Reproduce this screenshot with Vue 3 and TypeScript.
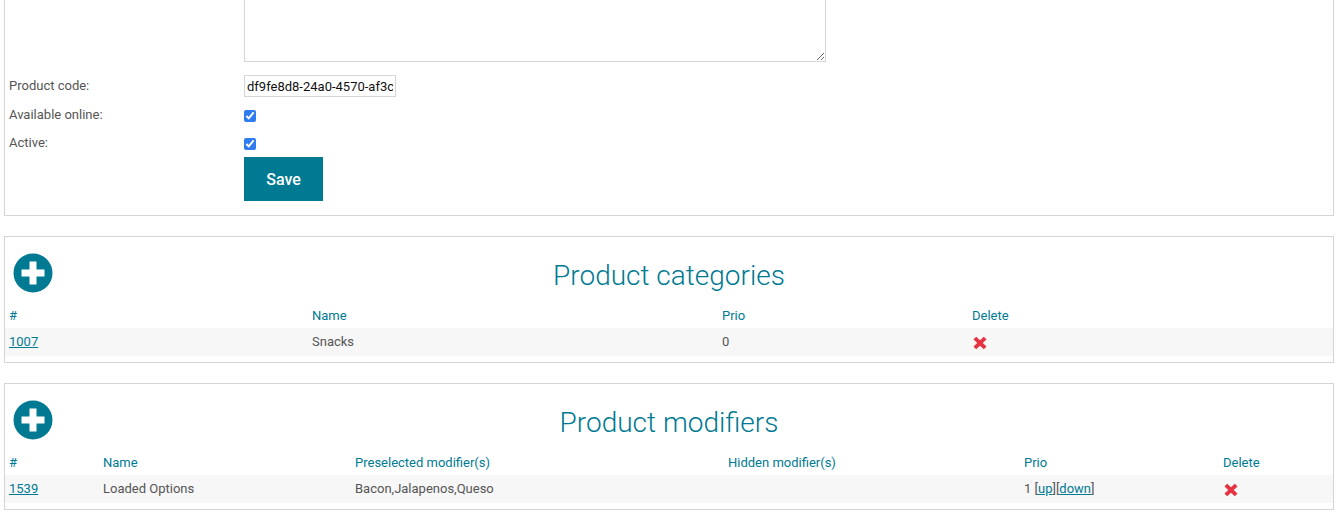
<script setup lang="ts">
interface CatRow { id: string; name: string; prio: string }
const cats: CatRow[] = [{ id: '1007', name: 'Snacks', prio: '0' }]
</script>

<template>
  <div class="page">
    <section class="panel form-panel">
      <div class="form-row area-row">
        <span class="label"></span>
        <textarea class="area"></textarea>
      </div>
      <div class="form-row code-row">
        <label class="label">Product code:</label>
        <input class="code" type="text" value="df9fe8d8-24a0-4570-af3c-8b1e6f2f10aa" />
      </div>
      <div class="form-row check-row">
        <label class="label">Available online:</label>
        <input class="check" type="checkbox" checked />
      </div>
      <div class="form-row check-row">
        <label class="label">Active:</label>
        <input class="check" type="checkbox" checked />
      </div>
      <div class="form-row save-row">
        <span class="label"></span>
        <button class="save" type="button">Save</button>
      </div>
    </section>

    <section class="panel list-panel">
      <div class="head">
        <svg class="add" viewBox="0 0 40 40" width="40" height="40">
          <circle cx="20" cy="20" r="19.5" fill="#007a93" />
          <path d="M16.5 8.5h7v8h8v7h-8v8h-7v-8h-8v-7h8z" fill="#fff" />
        </svg>
        <h2>Product categories</h2>
      </div>
      <div class="grid cats ths"><span>#</span><span>Name</span><span>Prio</span><span>Delete</span></div>
      <div v-for="c in cats" :key="c.id" class="grid cats row">
        <span><a href="#">{{ c.id }}</a></span>
        <span>{{ c.name }}</span>
        <span>{{ c.prio }}</span>
        <span>
          <svg class="del" viewBox="0 0 14 14" width="14" height="14">
            <path d="M3.2 1 7 4.6 10.8 1 13.2 3.4 9.4 7 13.2 10.6 10.8 13 7 9.4 3.2 13 .8 10.6 4.6 7 .8 3.4z" fill="#e8303f" stroke="#c9303f" stroke-width=".5" stroke-linejoin="round" />
          </svg>
        </span>
      </div>
    </section>

    <section class="panel list-panel">
      <div class="head">
        <svg class="add" viewBox="0 0 40 40" width="40" height="40">
          <circle cx="20" cy="20" r="19.5" fill="#007a93" />
          <path d="M16.5 8.5h7v8h8v7h-8v8h-7v-8h-8v-7h8z" fill="#fff" />
        </svg>
        <h2>Product modifiers</h2>
      </div>
      <div class="grid mods ths"><span>#</span><span>Name</span><span>Preselected modifier(s)</span><span>Hidden modifier(s)</span><span>Prio</span><span>Delete</span></div>
      <div class="grid mods row">
        <span><a href="#">1539</a></span>
        <span>Loaded Options</span>
        <span>Bacon,Jalapenos,Queso</span>
        <span></span>
        <span>1 [<a href="#">up</a>][<a href="#">down</a>]</span>
        <span>
          <svg class="del" viewBox="0 0 14 14" width="14" height="14">
            <path d="M3.2 1 7 4.6 10.8 1 13.2 3.4 9.4 7 13.2 10.6 10.8 13 7 9.4 3.2 13 .8 10.6 4.6 7 .8 3.4z" fill="#e8303f" stroke="#c9303f" stroke-width=".5" stroke-linejoin="round" />
          </svg>
        </span>
      </div>
    </section>
  </div>
</template>

<style>
html, body { margin: 0; background: #fff; overflow: hidden; }
</style>

<style scoped>
.page {
  height: 519px;
  overflow: hidden;
  padding: 0 3px 0 4px;
  box-sizing: border-box;
  font: 13px/20px Roboto, sans-serif;
  color: #555;
}
.panel {
  border: 1px solid #d5d5d5;
  box-sizing: border-box;
  background: #fff;
}
.form-panel {
  height: 217px;
  margin-top: -1px;
  padding: 0 4px;
  display: flex;
  flex-direction: column;
}
.form-row { display: flex; align-items: center; }
.label { width: 235px; flex: none; }
.area-row { height: 62px; align-items: flex-end; }
.area {
  width: 582px;
  height: 80px;
  box-sizing: border-box;
  border: 1px solid #d5d5d5;
  border-radius: 0;
  margin: 0;
  display: block;
}
.code-row { margin-top: 13px; height: 22px; }
.code {
  width: 152px;
  height: 22px;
  box-sizing: border-box;
  border: 1px solid #d5d5d5;
  padding: 0 2px;
  font: 13px Roboto, sans-serif;
  color: #111;
  outline: none;
}
.check-row { height: 28px; }
.code-row + .check-row { margin-top: 4px; }
.check { width: 12px; height: 12px; margin: 2px 0 0; accent-color: #2f7bf0; }
.save-row { align-items: flex-start; }
.save {
  width: 79px;
  height: 44px;
  border: 0;
  background: #007a93;
  color: #fff;
  font: 500 16px Roboto, sans-serif;
  padding: 0;
}
.list-panel { height: 127px; margin-top: 20px; }
.head {
  position: relative;
  height: 67px;
  display: flex;
  align-items: flex-end;
  justify-content: center;
}
.head h2 {
  margin: 0 0 9px;
  font: 300 28px/38px Roboto, sans-serif;
  color: #007a93;
}
.add { position: absolute; left: 8px; top: 16px; }
.grid { display: grid; padding: 0 4px; align-items: center; height: 28px; }
.cats { grid-template-columns: 303px 410px 250px 1fr; }
.mods { grid-template-columns: 94px 252px 373px 296px 199px 1fr; }
.ths { height: 24px; color: #007a93; }
.row { background: #f7f7f7; }
a { color: #007a93; text-decoration: underline; }
.del { display: block; margin-top: 2px; margin-left: 1px; }
</style>
